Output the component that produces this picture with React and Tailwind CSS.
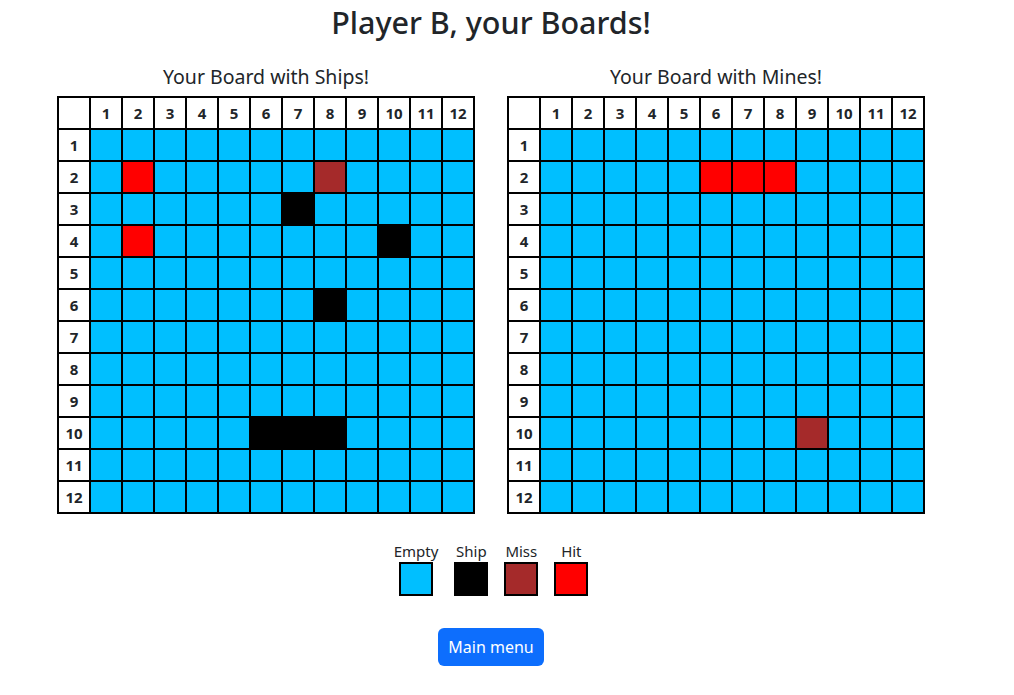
import React from "react";

const COLORS = {
  E: "bg-[#00bfff]",
  S: "bg-black",
  M: "bg-[#a52a2a]",
  H: "bg-[#ff0000]",
};

function makeBoard(special) {
  const b = Array.from({ length: 12 }, () => Array(12).fill("E"));
  special.forEach(([r, c, t]) => {
    b[r - 1][c - 1] = t;
  });
  return b;
}

const ships = makeBoard([
  [2, 2, "H"],
  [2, 8, "M"],
  [3, 7, "S"],
  [4, 2, "H"],
  [4, 10, "S"],
  [6, 8, "S"],
  [10, 6, "S"],
  [10, 7, "S"],
  [10, 8, "S"],
]);

const mines = makeBoard([
  [2, 6, "H"],
  [2, 7, "H"],
  [2, 8, "H"],
  [10, 9, "M"],
]);

function Board({ title, data }) {
  const cols = Array.from({ length: 12 }, (_, i) => i + 1);
  return (
    <div className="flex flex-col items-center">
      <div className="text-[19.5px] leading-[24px] text-[#212529] mb-[7px]">{title}</div>
      <div className="grid grid-cols-[repeat(13,30px)] auto-rows-[30px] gap-[2px] p-[2px] bg-black">
        <div className="bg-white" />
        {cols.map((c) => (
          <div key={"h" + c} className="bg-white flex items-center justify-center text-[15px] font-bold text-[#212529]">
            {c}
          </div>
        ))}
        {data.map((row, r) => (
          <React.Fragment key={r}>
            <div className="bg-white flex items-center justify-center text-[15px] font-bold text-[#212529]">
              {r + 1}
            </div>
            {row.map((t, c) => (
              <div key={c} className={COLORS[t]} />
            ))}
          </React.Fragment>
        ))}
      </div>
    </div>
  );
}

function Legend({ label, color }) {
  return (
    <div className="flex flex-col items-center">
      <div className="text-[15px] leading-[20px] text-[#212529] mb-[1px]">{label}</div>
      <div className={`w-[34px] h-[34px] border-2 border-black ${color}`} />
    </div>
  );
}

export default function App() {
  return (
    <div
      className="w-[982px] flex flex-col items-center bg-white"
      style={{ fontFamily: '"Noto Sans", "Open Sans", sans-serif' }}
    >
      <h2 className="mt-[3px] text-[30.5px] leading-[38px] font-medium text-[#212529]">
        Player B, your Boards!
      </h2>
      <div className="mt-[24px] flex gap-[32px]">
        <Board title="Your Board with Ships!" data={ships} />
        <Board title="Your Board with Mines!" data={mines} />
      </div>
      <div className="mt-[27px] flex gap-[16px]">
        <Legend label="Empty" color="bg-[#00bfff]" />
        <Legend label="Ship" color="bg-black" />
        <Legend label="Miss" color="bg-[#a52a2a]" />
        <Legend label="Hit" color="bg-[#ff0000]" />
      </div>
      <button className="mt-[32px] h-[38px] px-[10px] rounded-[6px] bg-[#0d6efd] text-white text-[16px] leading-[24px]">
        Main menu
      </button>
    </div>
  );
}
